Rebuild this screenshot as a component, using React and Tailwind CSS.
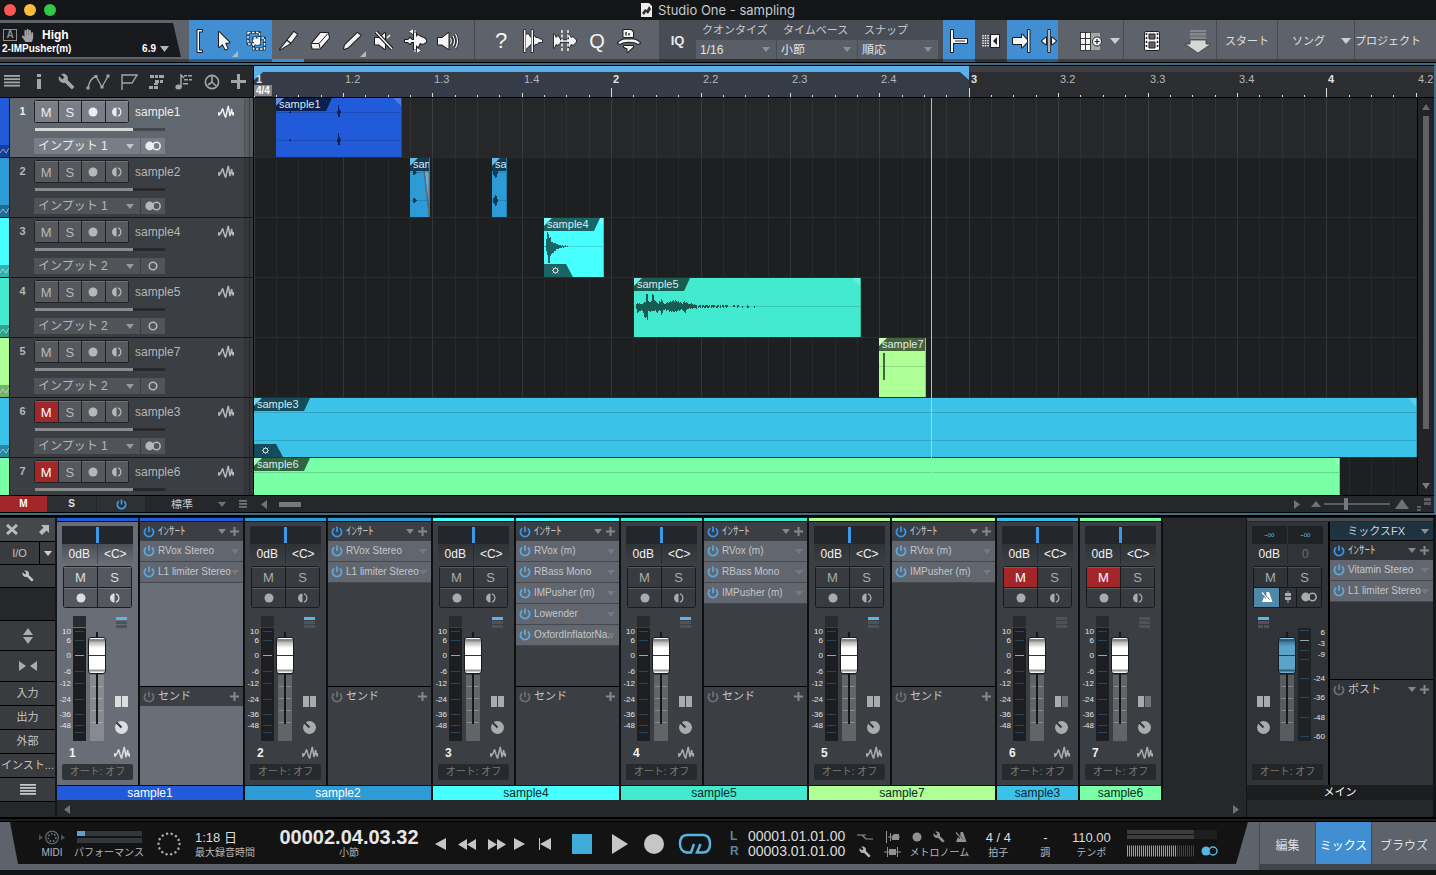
import React, { useState } from 'react';
import clsx from 'clsx';
import { FaHandPaper } from 'react-icons/fa';
import { MdBuild } from 'react-icons/md';

const BEAT = 89.4;
const STEP = BEAT / 4;

const TRACKS = [
  { id: 1, name: 'sample1', input: 'インプット 1', stereo: true, color: '#215bd9', dark: '#0a2150', text: '#ffffff', selected: true },
  { id: 2, name: 'sample2', input: 'インプット 1', stereo: true, color: '#2c9bd6', dark: '#0f3b54', text: '#ffffff' },
  { id: 3, name: 'sample4', input: 'インプット 2', color: '#48ffff', dark: '#1a6466', text: '#14272b' },
  { id: 4, name: 'sample5', input: 'インプット 2', color: '#42ebcf', dark: '#175b51', text: '#14272b' },
  { id: 5, name: 'sample7', input: 'インプット 2', color: '#adff96', dark: '#446539', text: '#14272b' },
  { id: 6, name: 'sample3', input: 'インプット 1', stereo: true, muted: true, color: '#3ac2e8', dark: '#144c5c', text: '#14272b' },
  { id: 7, name: 'sample6', input: 'インプット 1', stereo: true, muted: true, color: '#79ffa6', dark: '#2f6642', text: '#14272b' },
];

// [x, up, down] columns around the centre line
const WAVES = {
  hit: [[1, 1, 1], [2, 8, 5], [3, 15, 9], [4, 13, 17], [5, 9, 17], [6, 10, 10], [7, 5, 8], [8, 5, 7], [9, 4, 7], [10, 4, 5], [11, 4, 5], [12, 3, 3], [13, 3, 3], [14, 2, 3], [15, 2, 2], [16, 2, 2], [17, 1, 2], [18, 2, 1], [19, 1, 2], [20, 1, 1], [21, 2, 1], [23, 1, 1]],
  tail: [[2, 3, 3], [3, 4, 7], [4, 3, 6], [5, 4, 5], [6, 3, 5], [7, 3, 4], [8, 3, 5], [9, 4, 7], [10, 5, 11], [11, 5, 12], [12, 13, 11], [13, 13, 14], [14, 6, 5], [15, 5, 5], [16, 5, 6], [17, 6, 5], [18, 13, 5], [19, 12, 5], [20, 7, 5], [21, 6, 4], [22, 5, 6], [23, 4, 7], [24, 3, 5], [25, 6, 4], [26, 5, 5], [27, 8, 9], [28, 6, 7], [29, 4, 4], [30, 3, 4], [31, 3, 3], [32, 4, 5], [33, 5, 4], [34, 4, 4], [35, 5, 6], [36, 6, 5], [37, 5, 6], [38, 6, 5], [39, 7, 6], [40, 5, 6], [41, 7, 5], [42, 6, 6], [43, 5, 5], [44, 6, 4], [45, 4, 5], [46, 5, 4], [47, 4, 3], [48, 3, 4], [49, 5, 5], [50, 6, 6], [51, 4, 7], [52, 5, 4], [53, 4, 3], [54, 3, 3], [55, 3, 2], [56, 3, 3], [57, 4, 2], [58, 3, 3], [59, 2, 2], [60, 3, 2], [61, 2, 2], [62, 2, 3], [64, 1, 2], [65, 2, 1], [66, 2, 2], [68, 2, 2], [69, 2, 1], [70, 1, 2], [71, 2, 2], [72, 2, 1], [73, 2, 2], [74, 1, 2], [75, 2, 1], [77, 2, 2], [78, 2, 1], [79, 2, 2], [80, 2, 1], [82, 1, 2], [83, 2, 2], [84, 2, 1], [86, 2, 2], [88, 2, 1], [89, 2, 2], [91, 2, 1], [92, 2, 2], [93, 2, 1], [99, 2, 1], [100, 2, 1], [103, 2, 2], [104, 2, 1], [108, 1, 2], [113, 2, 2], [114, 1, 2], [120, 1, 2]],
  tick: [[4, 14, 14], [5, 14, 14]],
  blip: [[3, 3, 3], [4, 3, 3], [5, 2, 2], [6, 1, 1]],
  burst: [[1, 3, 3], [2, 4, 4], [3, 6, 6], [4, 5, 5], [5, 2, 2]],
  spikes: [[13, 1, 1], [14, 2, 1], [61, 2, 2], [62, 8, 5], [63, 4, 5], [64, 2, 1]],
};

const CLIPS = [
  { track: 1, name: 'sample1', x: 22, w: 126, wave: 'spikes' },
  { track: 2, name: 'sample2', x: 156, w: 20, wave: 'blip', fade: true },
  { track: 2, name: 'sample2', x: 238, w: 15, wave: 'burst' },
  { track: 3, name: 'sample4', x: 290, w: 60, wave: 'hit', fx: true },
  { track: 4, name: 'sample5', x: 380, w: 227, wave: 'tail' },
  { track: 5, name: 'sample7', x: 625, w: 47, wave: 'tick' },
  { track: 6, name: 'sample3', x: 0, fx: true },
  { track: 7, name: 'sample6', x: 0, w: 1086 },
];

const INSERTS = {
  1: ['RVox Stereo', 'L1 limiter Stereo'],
  2: ['RVox Stereo', 'L1 limiter Stereo'],
  3: ['RVox (m)', 'RBass Mono', 'IMPusher (m)', 'Lowender', 'OxfordInflatorNa..'],
  4: ['RVox (m)', 'RBass Mono', 'IMPusher (m)'],
  5: ['RVox (m)', 'IMPusher (m)'],
};

/* ---------- icons ---------- */

const Tri = ({ dir = 'down', w = 8, h = 5, className = 'text-[#8d9094]' }) => {
  const pts = {
    down: `0,0 ${w},0 ${w / 2},${h}`,
    up: `0,${h} ${w},${h} ${w / 2},0`,
    left: `${w},0 ${w},${h} 0,${h / 2}`,
    right: `0,0 ${w},${h / 2} 0,${h}`,
  };
  return (
    <svg width={w} height={h} className={clsx('shrink-0', className)} aria-hidden="true">
      <polygon points={pts[dir]} fill="currentColor" />
    </svg>
  );
};

const Plus = ({ size = 8, t = 2, className }) => (
  <svg width={size} height={size} viewBox="0 0 16 16" className={clsx('shrink-0', className)} aria-hidden="true">
    <path d="M8 0V16M0 8H16" stroke="currentColor" strokeWidth={(t * 16) / size} />
  </svg>
);

const Power = ({ className, size = 12 }) => (
  <svg width={size} height={size} viewBox="0 0 12 12" fill="none" stroke="currentColor" strokeWidth="1.8" className={clsx('shrink-0', className)} aria-hidden="true">
    <path d="M3.2 2.4A4.6 4.6 0 1 0 8.8 2.4" />
    <path d="M6 0.5V6" />
  </svg>
);

const WaveIcon = ({ className }) => (
  <svg width="16" height="14" viewBox="0 0 16 14" fill="none" stroke="currentColor" strokeWidth="1.500" strokeLinejoin="bevel" className={className} aria-hidden="true">
    <path d="M.8 7V10.500L3 7.500L4.600 3.500L6.200 9L7.600 12.500L8.600 8L10.300 1L12 11L13.700 4L14.200 8.500L15.300 10.500V7" />
  </svg>
);

const Rec = ({ r = 4.5 }) => (
  <svg width="12" height="12" aria-hidden="true"><circle cx="6" cy="6" r={r} fill="currentColor" /></svg>
);

const Monitor = () => (
  <svg width="12" height="12" viewBox="0 0 12 12" aria-hidden="true">
    <path d="M5.500 1.500A4.500 4.500 0 0 0 5.500 10.500Z" fill="currentColor" />
    <path d="M7 1.800A4.500 4.500 0 0 1 7 10.200" fill="none" stroke="currentColor" strokeWidth="1.200" />
  </svg>
);

const StereoIcon = () => (
  <svg width="16" height="10" viewBox="0 0 16 10" aria-hidden="true">
    <circle cx="4.700" cy="5" r="4.400" fill="currentColor" />
    <circle cx="11.500" cy="5" r="3.700" fill="none" stroke="currentColor" strokeWidth="1.600" />
  </svg>
);

const MonoIcon = () => (
  <svg width="10" height="10" aria-hidden="true"><circle cx="5" cy="5" r="3.800" fill="none" stroke="currentColor" strokeWidth="1.600" /></svg>
);

const Gear = () => (
  <svg width="9" height="9" viewBox="0 0 9 9" stroke="#dfe6e6" fill="none" aria-hidden="true">
    <circle cx="4.500" cy="4.500" r="2.300" />
    <path d="M4.500 1V1.800M4.500 7.200V8M1 4.500H1.800M7.200 4.500H8M1.700 1.700L2.500 2.500M6.500 6.500L7.300 7.300M7.300 1.700L6.500 2.500M1.700 7.300L2.500 6.500" />
  </svg>
);

const Lines = ({ w = 16, h = 11, n = 4, className }) => (
  <svg width={w} height={h} className={className} aria-hidden="true">
    {Array.from({ length: n }, (_, i) => (
      <rect key={i} x="0" y={i * (h / n)} width={w} height="1.800" fill="currentColor" />
    ))}
  </svg>
);

const Metronome = ({ size = 12 }) => (
  <svg width={size} height={size} viewBox="0 0 12 12" aria-hidden="true">
    <path d="M5.500 1H8L11.500 11H1L3 6L5 8Z" fill="currentColor" />
    <path d="M1 1.500L8 9" stroke="currentColor" strokeWidth="1.200" />
    <path d="M3.500 3L8.500 8.500" stroke="#222" strokeWidth=".6" />
  </svg>
);

const ink = { fill: '#f4f4f4', stroke: '#1d1e22', strokeWidth: 2, paintOrder: 'stroke', strokeLinejoin: 'round' };
const Ico = ({ children, size = 24 }) => (
  <svg width={size} height={size} viewBox="0 0 24 24" className="shrink-0" {...ink} aria-hidden="true">{children}</svg>
);

const ICONS = {
  bracket: <Ico><path d="M15 1H10.500V23H15V21.500H12V2.500H15Z" /></Ico>,
  arrow: <Ico><path d="M7 3V18L10.500 15L13.500 20.500L15.700 19.400L13 14L17.500 13.500Z" /></Ico>,
  range: (
    <Ico>
      <path d="M4 3.500H15.500V15H4ZM9.500 9H20.500V20H9.500Z" fill="none" stroke="#1d3d5c" strokeWidth="3" />
      <path d="M4 3.500H15.500V15H4ZM9.500 9H20.500V20H9.500Z" fill="none" stroke="#f4f4f4" strokeWidth="1.400" strokeDasharray="2.500 1.500" />
      <rect x="10" y="9.500" width="6" height="6" stroke="none" />
    </Ico>
  ),
  knife: <Ico><path d="M18 3L21 5.500L15 13.500L11.500 11Z" /><path d="M11 12L14 14.500L4 20.500Z" /></Ico>,
  eraser: (
    <Ico>
      <path d="M12.500 4H20L21 9L12 19.500H4.500L3.500 15Z" />
      <path d="M3.500 14.500H11L20 4.500M11 14.500L12 19" fill="none" strokeWidth="1" />
    </Ico>
  ),
  pencil: <Ico><path d="M17.500 4L20.500 6.500L8 18.500L4 20L5 16Z" /></Ico>,
  mute: (
    <Ico>
      <path d="M3 9H7L13 4V20L7 15.500H3Z" />
      <path d="M4 3L20 20" stroke="#1d1e22" strokeWidth="4" />
      <path d="M4 3L20 20" stroke="#f4f4f4" strokeWidth="1.500" />
      <path d="M15 9L18 6" stroke="#f4f4f4" strokeWidth="1.500" />
    </Ico>
  ),
  bend: (
    <Ico>
      <path d="M1 11H4L6 9L8 11H10V4H12V8L14 6L17 8L20 9L22 11V13L19 15L16 14L14 18L12 16V20H10V13H7L6 15L4 13H1Z" />
      <path d="M9 0V5L5 2.500ZM13 19V24L17 21.500Z" strokeWidth="1" />
      <path d="M11 1V23" stroke="#f4f4f4" strokeWidth="1" />
    </Ico>
  ),
  listen: (
    <Ico>
      <path d="M2 9H6L12.500 4V20L6 15.500H2Z" />
      <path d="M14.500 9Q16 12 14.500 15M17 7Q20 12 17 17M19.500 5Q23.500 12 19.500 19" fill="none" stroke="#1d1e22" strokeWidth="2.800" />
      <path d="M14.500 9Q16 12 14.500 15M17 7Q20 12 17 17M19.500 5Q23.500 12 19.500 19" fill="none" stroke="#f4f4f4" strokeWidth="1.300" />
    </Ico>
  ),
  help: <span className="text-[22px] leading-6 text-[#f4f4f4]">?</span>,
  transient: (
    <Ico>
      <path d="M3 1H4.500V23H3ZM5 6L7 5L10 9V15L7 18L5 20ZM10.500 1H12V23H10.500ZM13 7L15 9H17L19 10.500H21V13H18L16 15H14L13 17Z" strokeWidth="1.500" />
    </Ico>
  ),
  split: (
    <Ico>
      <path d="M1 5L3 9L5 7L7 10V14L5 16L3 15L1 19ZM7 11.300H17V12.700H7ZM16 5L18 9L20 8L23 11V13L20 16L18 15L16 19Z" strokeWidth="1.500" />
      <path d="M9 1V23M15 1V23" fill="none" stroke="#f4f4f4" strokeWidth="1.500" strokeDasharray="3 1.500" />
    </Ico>
  ),
  quantize: <span className="text-[20px] leading-6 text-[#f4f4f4]">Q</span>,
  macro: (
    <Ico>
      <path d="M6.500 1H14L16 3V8H6.500Z" />
      <path d="M9 3V6.500M12 4V6.500" strokeWidth="1.300" />
      <path d="M1 14Q4 10.500 8 10.500H16Q20 10.500 23 14L21 15Q18 12.800 12 12.800Q6 12.800 3 15Z" />
      <path d="M7 17H16V18L10.500 23V19.500L7 18Z" />
    </Ico>
  ),
  iq: <span className="text-[13px] font-bold text-[#e8e8e8]">IQ</span>,
};

const SNAP_ICONS = {
  grid: <Ico><path d="M4 1H6V23H4ZM6 10H20V14H6Z" /><path d="M8 12H18" stroke="#1d3d5c" strokeWidth="1" /></Ico>,
  events: (
    <Ico>
      <path d="M4 6V18M6.500 6V18M9 6V18" stroke="#f4f4f4" strokeWidth="1.500" strokeDasharray="1.500 1" />
      <path d="M12 6H20V18H12Z" /><path d="M18 8V16L14 12Z" fill="#222" stroke="none" />
    </Ico>
  ),
  cursor: <Ico><path d="M2 9H11V5.500L17 12L11 18.500V15H2Z" /><path d="M17 1H18.500V23H17Z" /></Ico>,
  both: <Ico><path d="M11.300 1H12.700V23H11.300ZM9 8.500V15.500L5 12ZM15 8.500V15.500L19 12Z" /></Ico>,
};

/* ---------- small controls ---------- */

const Select = ({ label, value, className, triClass }) => (
  <span className={clsx('relative flex items-center', className)}>
    <select aria-label={label} className="w-full h-full appearance-none bg-transparent pl-1 pr-3 outline-none">
      <option>{value}</option>
    </select>
    <span className="absolute right-1.5 pointer-events-none"><Tri className={triClass} /></span>
  </span>
);

const MsButton = ({ children, label, on, className }) => (
  <button
    aria-label={label}
    className={clsx('flex items-center justify-center border-t border-white/15', on ? 'bg-[#a3262b] text-white' : className)}
  >
    {children}
  </button>
);

/* ---------- top ---------- */

function TitleBar() {
  return (
    <header className="relative h-5 bg-[#141517] flex items-center justify-center shrink-0">
      <div className="absolute left-1 flex gap-2">
        <button aria-label="Close" className="w-3 h-3 rounded-full bg-[#fc5753]" />
        <button aria-label="Minimize" className="w-3 h-3 rounded-full bg-[#fdbc40]" />
        <button aria-label="Zoom" className="w-3 h-3 rounded-full bg-[#33c748]" />
      </div>
      <svg width="11" height="14" viewBox="0 0 11 14" aria-hidden="true">
        <path d="M0 0H8L11 3V14H0Z" fill="#eee" />
        <path d="M1 10L4 6L6 7L8 3L10 6L7 11L5 9L3 12Z" fill="#333" />
      </svg>
      <h1 className="ml-1.5 text-[13px] font-[family-name:Inter,sans-serif] text-[#c9c9c9]">Studio One - sampling</h1>
    </header>
  );
}

function ToolButton({ icon, label, blue, active, corner, className }) {
  return (
    <button
      aria-label={label}
      className={clsx(
        'relative w-8 h-full shrink-0 flex items-center justify-center border-b-[3px] pt-[2px]',
        blue ? 'bg-[#418fd2]' : '',
        active ? 'border-[#418fd2]' : 'border-black/35',
        className
      )}
    >
      {icon}
      {corner && <span className="absolute right-0.5 bottom-0.5 w-1.5 h-1.5 bg-[#b4b7bb] [clip-path:polygon(100%_0,100%_100%,0_100%)]" />}
    </button>
  );
}

function Field({ label, value }) {
  return (
    <label className="flex flex-col w-[81px] h-full text-[12px] text-[#e2e2e2]">
      <span className="h-5 leading-5 pl-1.5 whitespace-nowrap text-[11px] text-[#c9cacc]">{label}</span>
      <Select label={label} value={value} className="h-[19px] mr-px bg-[#5a5e66]" />
    </label>
  );
}

function Toolbar() {
  return (
    <div className="h-[42px] shrink-0 flex bg-[#5e626b] overflow-hidden">
      <div className="w-[189px] shrink-0 pt-[3px] border-b-[3px] border-black/35">
        <div className="w-[181px] h-[34px] bg-[#181a1e] [clip-path:polygon(0_0,173px_0,100%_100%,0_100%)] text-white font-bold">
          <div className="flex items-center gap-1 pl-[3px] pt-1 h-5">
            <span className="w-[14px] h-3 border border-[#8d8d8d] text-[#8d8d8d] text-[10px] leading-[10px] text-center">A</span>
            <FaHandPaper size={13} className="text-[#a2a2a2]" />
            <span className="ml-1 text-[12px]">High</span>
          </div>
          <div className="flex items-center text-[10px] h-3 pl-0.5">
            <span className="flex-1">2-IMPusher(m)</span>
            <span>6.9</span>
            <Tri w={9} h={6} className="text-[#b5b5b5] ml-1 mr-3" />
          </div>
        </div>
      </div>
      <ToolButton blue icon={ICONS.bracket} label="Link tools" className="w-[19px]" />
      <ToolButton blue corner icon={ICONS.arrow} label="Arrow tool" />
      <ToolButton blue icon={ICONS.range} label="Range tool" />
      <ToolButton active icon={ICONS.knife} label="Split tool" />
      <ToolButton icon={ICONS.eraser} label="Eraser tool" />
      <ToolButton corner icon={ICONS.pencil} label="Paint tool" />
      <ToolButton icon={ICONS.mute} label="Mute tool" />
      <ToolButton icon={ICONS.bend} label="Bend tool" />
      <ToolButton icon={ICONS.listen} label="Listen tool" />
      <div className="w-[11px] shrink-0 border-r border-[#45484e] border-b-[3px] border-b-black/35" />
      <div className="flex pl-2.5 pr-[14px] border-b-[3px] border-black/35">
        <ToolButton icon={ICONS.help} label="Help" className="border-none" />
        <ToolButton icon={ICONS.transient} label="Transients" className="border-none" />
        <ToolButton icon={ICONS.split} label="Strip silence" className="border-none" />
        <ToolButton icon={ICONS.quantize} label="Quantize" className="border-none" />
        <ToolButton icon={ICONS.macro} label="Macros" className="border-none" />
      </div>
      <div className="flex bg-[#484c54] border-b-[3px] border-black/35 pr-1">
        <ToolButton icon={ICONS.iq} label="Input quantize" className="border-none w-[37px]" />
        <Field label="クオンタイズ" value="1/16" />
        <Field label="タイムベース" value="小節" />
        <Field label="スナップ" value="順応" />
      </div>
      <ToolButton blue icon={SNAP_ICONS.grid} label="Autoscroll" />
      <ToolButton icon={SNAP_ICONS.events} label="Snap to events" className="bg-[#484c54]" />
      <ToolButton blue icon={SNAP_ICONS.cursor} label="Snap to cursor" />
      <ToolButton blue icon={SNAP_ICONS.both} label="Snap relative" className="w-[19px]" />
      <nav className="flex-1 flex items-center text-[11px] text-[#e0e0e0] border-b-[3px] border-black/35 whitespace-nowrap *:pt-[3px]">
        <button aria-label="Grid view" className="flex items-center gap-2 h-full w-[66px] pl-[22px] border-r border-[#484b52]">
          <svg width="22" height="19" viewBox="0 0 22 19" aria-hidden="true">
            <g fill="#f4f4f4" stroke="#222" strokeWidth=".8">
              {[0, 1, 2].map(r => [0, 1].map(c => <rect key={`${r}${c}`} x={c * 5 + 0.5} y={r * 6 + 0.5} width="5" height="6" />))}
            </g>
            <path d="M11 1H20V18H11Z" fill="#a3a6ac" />
            <circle cx="17" cy="9.500" r="4.500" fill="#f4f4f4" stroke="#222" />
            <path d="M17 7V12M14.500 9.500H19.500" stroke="#222" strokeWidth="1.200" />
          </svg>
          <Tri w={10} h={6} className="text-[#cfcfcf]" />
        </button>
        <button aria-label="Video player" className="h-full w-14 flex items-center justify-center">
          <svg width="16" height="20" viewBox="0 0 16 20" aria-hidden="true">
            <rect x=".5" y=".5" width="15" height="19" rx="1.500" fill="#f4f4f4" stroke="#222" />
            <path d="M5 3H11V8H5ZM5 11H11V17H5Z" fill="#5e626b" stroke="#222" />
            <path d="M2.500 2V18M13.500 2V18" stroke="#222" strokeWidth="1.500" strokeDasharray="2 2" />
          </svg>
        </button>
        <button aria-label="Export" className="h-full w-[37px] flex items-center justify-center border-r border-[#484b52]">
          <svg width="28" height="25" viewBox="0 0 28 25" aria-hidden="true">
            <path d="M6 1H22V3H6ZM6 4H22V6.500H6ZM6 7.500H22V10H6Z" fill="#85888f" />
            <path d="M6 11H22V15H27L14 24L1 15H6Z" fill="#d5d7d6" stroke="#333" strokeWidth=".7" />
          </svg>
        </button>
        <a href="#start" className="w-[61px] h-full flex items-center justify-center border-r border-[#484b52]">スタート</a>
        <a href="#song" className="w-[77px] h-full flex items-center justify-end gap-4 pr-[3px] border-r border-[#484b52]">
          ソング <Tri w={10} h={6} className="text-[#cfcfcf]" />
        </a>
        <a href="#project" className="h-full flex items-center">プロジェクト</a>
      </nav>
    </div>
  );
}

/* ---------- arrangement ---------- */

function TrackTools() {
  return (
    <div className="w-[253px] shrink-0 h-full bg-[#26282b] text-[#a3a5a7] flex items-center justify-between pl-1 pr-[7px]">
      <button aria-label="Track list"><Lines w={16} h={13} /></button>
      <button aria-label="Inspector" className="w-4 flex justify-center">
        <svg width="4" height="15" aria-hidden="true"><path d="M0 0H4V3H0ZM0 5H4V15H0Z" fill="currentColor" /></svg>
      </button>
      <button aria-label="Options"><MdBuild size={17} /></button>
      <button aria-label="Automation">
        <svg width="24" height="16" viewBox="0 0 24 16" fill="none" stroke="currentColor" strokeWidth="1.300" aria-hidden="true">
          <path d="M2 14Q4 4 10 2.500L16 13L22 2" />
          <path d="M.5 12.500H3.500V15.500H.5ZM8.500 1H11.500V4H8.500ZM14.500 11.500H17.500V14.500H14.500ZM20.500 .5H23.500V3.500H20.500Z" fill="currentColor" stroke="none" />
        </svg>
      </button>
      <button aria-label="Marker track">
        <svg width="17" height="16" viewBox="0 0 17 16" fill="none" stroke="currentColor" strokeWidth="1.400" aria-hidden="true"><path d="M1 16V1H16L11 9H1" /></svg>
      </button>
      <button aria-label="Arranger track">
        <svg width="15" height="16" aria-hidden="true"><path d="M1 1H5V4H1ZM6 1H9V4H6ZM10 1H15V4H10ZM6 6H10V9H6ZM11 6H14V9H11ZM0 12H4V15H0ZM5 12H9V15H5ZM5 9H9V11H5Z" fill="currentColor" /></svg>
      </button>
      <button aria-label="Chord track">
        <svg width="18" height="16" viewBox="0 0 18 16" aria-hidden="true">
          <ellipse cx="3.500" cy="13" rx="3.200" ry="2.500" fill="currentColor" />
          <path d="M6 13V1L9 4" stroke="currentColor" strokeWidth="1.500" fill="none" />
          <path d="M9 1H12V2.500H9ZM13 1H17V2.500H13ZM9 5H13V6.500H9ZM14 5H17V6.500H14ZM8 9H13V10.500H8Z" fill="currentColor" />
        </svg>
      </button>
      <button aria-label="Tempo track">
        <svg width="16" height="16" viewBox="0 0 16 16" fill="none" stroke="currentColor" strokeWidth="1.600" aria-hidden="true"><circle cx="8" cy="8" r="6.600" /><path d="M8 2V9M8 8L12 12M8 8L4 11" /></svg>
      </button>
      <button aria-label="Add track"><Plus size={15} t={3} /></button>
    </div>
  );
}

function Ruler() {
  const ticks = Array.from({ length: 53 }, (_, i) => i);
  return (
    <div className="relative flex-1 h-full bg-[#2b2d31] overflow-hidden text-[11px]">
      <div className="h-1.5 bg-[#3d3f43]" />
      <div className="absolute inset-y-0 left-0 w-[715px] bg-[#363b48]" />
      <div className="absolute left-0 top-0 w-[715px] h-[14px] bg-[#5cb0ea] [clip-path:polygon(0_0,100%_0,100%_100%,706px_6px,9px_6px,0_100%)]" />
      {ticks.map(i => {
        const bar = Math.floor(i / 16) + 1;
        const beat = (Math.floor(i / 4) % 4) + 1;
        const isBar = i % 16 === 0;
        const isBeat = i % 4 === 0;
        return (
          <React.Fragment key={i}>
            <span
              className={clsx('absolute bottom-0 w-px bg-[#dadbdd]', isBar ? 'h-[9px]' : isBeat ? 'h-1' : 'h-0.5')}
              style={{ left: Math.floor(i * STEP) }}
            />
            {isBeat && (
              <span
                className={clsx('absolute top-1.5 leading-[15px]', isBar ? 'font-bold text-[#e0e1e3]' : 'text-[#b4b6b9]')}
                style={{ left: Math.floor(i * STEP) + 2 }}
              >
                {isBar ? bar : `${bar}.${beat}`}
              </span>
            )}
          </React.Fragment>
        );
      })}
      <span className="absolute left-0 bottom-px px-0.5 bg-[#85868a] text-[10px] leading-[11px] font-bold text-white">4/4</span>
    </div>
  );
}

function TrackHeader({ track }) {
  return (
    <li className={clsx('h-[60px] flex border-b border-[#17181a]', track.selected ? 'bg-[#61676e] text-[#eceded]' : 'bg-[#3b3e42] text-[#b5b7b9]')}>
      <div className="w-[9px] flex flex-col justify-end" style={{ background: track.color }}>
        <div className="h-3 bg-black/30 flex items-center text-white/50">
          <svg width="9" height="8" fill="none" stroke="currentColor" aria-hidden="true"><path d="M0 6L3 2L6 6L9 1" /></svg>
        </div>
      </div>
      <span className="w-[25px] pt-2 pl-px text-center text-[11px] font-bold border-l border-[#17181a]">{track.id}</span>
      <div className="flex-1 pt-[2px]">
        <div className="flex items-center h-[23px]">
          <div className="grid grid-cols-4 gap-px w-[95px] h-[23px] p-px rounded-[3px] bg-[#1f2123] text-[13px]">
            {[
              ['Mute', 'M'],
              ['Solo', 'S'],
              ['Record', <Rec key="r" />],
              ['Monitor', <Monitor key="m" />],
            ].map(([label, content], i) => (
              <MsButton
                key={label}
                label={`${label} ${track.name}`}
                on={i === 0 && track.muted}
                className={track.selected ? 'bg-[#7a7d87]' : 'bg-[#55585d]'}
              >
                {content}
              </MsButton>
            ))}
          </div>
          <span className="ml-1.5 flex-1 text-[12px]">{track.name}</span>
          <WaveIcon className="mr-[10px]" />
        </div>
        <div className="h-3 mb-[3px] flex items-center">
          <input
            type="range"
            aria-label={`Volume ${track.name}`}
            defaultValue="75"
            className={clsx(
              'block ml-px w-[130px] h-[3px] appearance-none [&::-webkit-slider-thumb]:appearance-none [&::-webkit-slider-thumb]:w-0',
              track.selected
                ? 'bg-[linear-gradient(to_right,#d5d6d7_98px,#44474c_98px)]'
                : 'bg-[linear-gradient(to_right,#898b8e_98px,#26282b_98px)]'
            )}
          />
        </div>
        <div className={clsx('flex gap-px h-4 text-[12px]', track.selected ? '*:bg-[#797d86]' : '*:bg-[#505358]')}>
          <Select label={`Input ${track.name}`} value={track.input} className="w-[106px]" triClass={track.selected ? 'text-[#c5c7ca]' : 'text-[#97999c]'} />
          <button aria-label={`Channel mode ${track.name}`} className="w-6 flex items-center justify-center">
            {track.stereo ? <StereoIcon /> : <MonoIcon />}
          </button>
        </div>
      </div>
      <div className="w-[9px] bg-black/10 border-l border-black/10 flex justify-center"><span className="w-px bg-black/30" /></div>
    </li>
  );
}

function Clip({ clip, track }) {
  const cols = WAVES[clip.wave] || [];
  const lines = track.stereo ? [14, 42] : [28];
  return (
    <div
      className="absolute top-0 h-[59px] overflow-hidden border-r border-black/20"
      style={{ left: clip.x, background: track.color, ...(clip.w ? { width: clip.w } : { right: 0 }) }}
    >
      <svg width="100%" height="59" className="absolute inset-0" aria-hidden="true">
        {lines.map(y => (
          <g key={y}>
            <rect x="0" y={y} width="100%" height="1" fill="#000" opacity=".15" />
            {cols.map(([x, up, down]) => (
              <rect key={x} x={x} y={y - up + 1} width="1" height={up + down - 1} fill={track.dark} />
            ))}
          </g>
        ))}
        {clip.fade && <path d="M13 0L19 59M14 13L19 50V13Z" stroke="#5a6570" fill="#fff" fillOpacity=".25" />}
      </svg>
      <span className="absolute left-0 top-0 w-2 h-2 bg-white/30 [clip-path:polygon(0_0,100%_0,0_100%)]" />
      <span className="absolute right-0 top-0 w-2 h-2 bg-white/20 [clip-path:polygon(0_0,100%_0,100%_100%)]" />
      <span
        className="relative block w-14 h-[13px] pl-[3px] text-[11px] leading-[13px] text-[#dfe7ea] whitespace-nowrap [clip-path:polygon(8px_0,100%_0,50px_100%,0_100%,0_8px)]"
        style={{ background: track.dark }}
      >
        {clip.name}
      </span>
      {clip.fx && (
        <span
          className="absolute left-0 bottom-0 w-[29px] h-[13px] pl-[7px] flex items-center [clip-path:polygon(0_0,22px_0,100%_100%,0_100%)]"
          style={{ background: track.dark }}
        >
          <Gear />
        </span>
      )}
    </div>
  );
}

function Arrangement() {
  const grid = Array.from({ length: 52 }, (_, i) => i);
  return (
    <main className="flex-1 min-h-0 flex flex-col border-y-2 border-r-2 border-[#3f6e89] bg-black">
      <div className="h-8 shrink-0 flex gap-px pt-px">
        <TrackTools />
        <Ruler />
      </div>
      <div className="flex-1 min-h-0 flex gap-px pt-px">
        <ul className="w-[253px] shrink-0 overflow-hidden">
          {TRACKS.map(t => <TrackHeader key={t.id} track={t} />)}
        </ul>
        <div className="relative flex-1 overflow-hidden bg-[#1e1f21]">
          {grid.map(i => (
            <span
              key={i}
              className={clsx('absolute inset-y-0 w-px', i % 4 === 0 ? 'bg-[#343638]' : 'bg-[#27292b]')}
              style={{ left: Math.floor(i * STEP) }}
            />
          ))}
          {TRACKS.map(t => (
            <div key={t.id} className={clsx('relative h-[60px] border-b border-[#2b2c2e]', t.selected && 'bg-white/4')}>
              {CLIPS.filter(c => c.track === t.id).map(c => <Clip key={c.x} clip={c} track={t} />)}
            </div>
          ))}
          <span className="absolute inset-y-0 left-[677px] w-px bg-[#c9cbcc]/90" />
        </div>
        <div className="w-4 shrink-0 bg-[#222326] flex flex-col items-center pt-1.5 pb-1.5 gap-1.5">
          <Tri dir="up" w={8} h={6} className="text-[#68696c]" />
          <span className="w-1.5 h-[313px] bg-[#606165]" />
          <Tri w={8} h={6} className="text-[#7a7b7e] mt-auto" />
        </div>
      </div>
      <div className="h-[18px] shrink-0 flex items-center bg-[#26272b] border-y border-black text-[#707278]">
        <button className="w-[47px] h-full bg-[#a3262b] text-white text-[10px] font-bold">M</button>
        <button className="w-[49px] h-full bg-[#2e2f32] text-[#e0e0e0] text-[10px] font-bold">S</button>
        <button aria-label="Automation power" className="w-12 h-full ml-px bg-[#2e3033] text-[#36a0ec] flex items-center justify-center"><Power size={11} /></button>
        <Select label="Automation mode" value="標準" className="w-[87px] h-full pl-[22px] text-[11px] text-[#c9cacb]" triClass="text-[#707278]" />
        <Lines w={8} h={9} n={3} className="ml-[7px]" />
        <Tri dir="left" w={6} h={9} className="ml-3.5" />
        <span className="ml-3 w-[22px] h-[5px] bg-[#77787c]" />
        <Tri dir="right" w={6} h={9} className="ml-auto" />
        <Tri dir="up" w={10} h={6} className="ml-[11px]" />
        <input
          type="range"
          aria-label="Zoom"
          defaultValue="33"
          className="mx-[3px] w-[66px] h-3 appearance-none bg-[linear-gradient(transparent_5px,#5b5c64_5px,#5b5c64_7px,transparent_7px)] [&::-webkit-slider-thumb]:appearance-none [&::-webkit-slider-thumb]:w-1 [&::-webkit-slider-thumb]:h-3 [&::-webkit-slider-thumb]:bg-[#77787f]"
        />
        <Tri dir="up" w={14} h={10} className="ml-0.5" />
        <svg width="14" height="13" className="ml-2 mr-[3px]" aria-hidden="true"><path d="M7 0H14V3H7ZM7 4H14V7H7ZM0 8H4V10H0ZM0 11H4V13H0Z" fill="#5b5c64" /></svg>
      </div>
    </main>
  );
}

/* ---------- mixer ---------- */

const SCALE = [[15, '10'], [24, '6'], [39, '0'], [55, '-6'], [67, '-12'], [83, '-24'], [98, '-36'], [109, '-48'], [116, '']];
const MAIN_SCALE = [[14, '6'], [24, '-3'], [34, '-9'], [43, ''], [62, '-24'], [81, '-36'], [101, '-48'], [120, '-60']];

const Meter = () => (
  <svg width="29" height="125" className="shrink-0" aria-label="Level meter">
    <rect x="16" y="0" width="13" height="11" fill="#292b2e" />
    <rect x="16" y="12" width="13" height="113" fill="#1c1e21" />
    {SCALE.map(([y, label]) => (
      <g key={y}>
        <rect x="18" y={y} width="9" height="1" fill={label === '0' ? '#9aa5ad' : '#27475f'} />
        <text x="14" y={y + 3} textAnchor="end" fontSize="8" fill="#e2e4e6">{label}</text>
      </g>
    ))}
  </svg>
);

const MainMeter = () => (
  <svg width="29" height="125" className="shrink-0" aria-label="Main level meter">
    <rect x="0" y="12" width="13" height="113" fill="#1f2125" />
    {MAIN_SCALE.map(([y, label], i) => (
      <g key={y}>
        <rect x="2" y={y} width="9" height="1" fill={i === 1 ? '#9aa5ad' : '#27475f'} />
        <text x="27" y={i < 3 ? 19 + i * 11 : y + 3} textAnchor="end" fontSize="8" fill="#e2e4e6">{label}</text>
      </g>
    ))}
  </svg>
);

const Fader = ({ label, main }) => (
  <input
    type="range"
    aria-label={label}
    defaultValue="93"
    className={clsx(
      'block mt-4 w-[18px] h-[109px] appearance-none [writing-mode:vertical-lr] [direction:rtl]',
      'bg-[linear-gradient(#17181a,#17181a),repeating-linear-gradient(transparent_0_11px,rgba(255,255,255,0.25)_11px_12px),linear-gradient(rgba(255,255,255,0.2),rgba(255,255,255,0.2))]',
      'bg-no-repeat bg-[size:2px_92px,12px_48px,14px_66px] bg-[position:8px_0,3px_43px,2px_43px]',
      '[&::-webkit-slider-thumb]:appearance-none [&::-webkit-slider-thumb]:w-[18px] [&::-webkit-slider-thumb]:h-[37px] [&::-webkit-slider-thumb]:rounded-[3px] [&::-webkit-slider-thumb]:border [&::-webkit-slider-thumb]:border-[#1b1c1e]',
      main
        ? '[&::-webkit-slider-thumb]:bg-[linear-gradient(#8cc4e2_0_1px,#2c5c78_1px_3px,#417f9f_4px,#5ba3c9_9px_17px,#2b3a44_17px_18px,#5ba3c9_18px_31px,#2c5c78_32px_33px,#6fb1d3_34px)]'
        : '[&::-webkit-slider-thumb]:bg-[linear-gradient(#ffffff_0_1px,#888888_1px_3px,#b5b5b5_4px,#ffffff_10px_17px,#333333_17px_18px,#ffffff_18px_31px,#999999_32px_33px,#f4f4f4_34px)]'
    )}
  />
);

const GroupIcon = ({ lit, main }) => (
  <svg width="13" height="13" aria-hidden="true">
    <rect x="1" y="1" width="11" height="3" fill={lit ? '#5fb3ea' : '#515254'} />
    <rect x="1" y="5" width="11" height="3" fill="#515254" />
    <path d={main ? 'M1 9H6V12H1ZM7 9H12V12H7Z' : 'M1 9H12V12H1Z'} fill="#515254" />
  </svg>
);

const PairIcon = ({ mono }) => (
  <svg width="13" height="11" aria-hidden="true">
    <rect width="6" height="11" fill="currentColor" />
    <rect x="7" width="6" height="11" fill="currentColor" opacity={mono ? 0.5 : 1} />
  </svg>
);

const Knob = () => (
  <svg width="13" height="13" viewBox="0 0 13 13" aria-hidden="true">
    <circle cx="6.500" cy="6.500" r="6.500" fill="currentColor" />
    <path d="M1.500 1.500L6.500 6.500" stroke="#333538" strokeWidth="2" />
  </svg>
);

const SideIcons = ({ lit, mono, main }) => (
  <div className="flex flex-col items-center w-[13px]">
    <GroupIcon lit={lit} main={main} />
    <span className="mt-[67px]"><PairIcon mono={mono} /></span>
    <span className="mt-[14px]"><Knob /></span>
  </div>
);

function ChannelStrip({ track }) {
  const sel = track.selected;
  return (
    <div className={clsx('w-[81px] h-[263px] px-1 pt-1 flex flex-col', sel ? 'bg-[#696d76] text-[#dcdddf]' : 'bg-[#3b3e42] text-[#a9abad]')}>
      <div className="h-[18px] mx-px bg-[#23272b] flex justify-center py-px"><span className="w-[3px] bg-[#3b97e8]" /></div>
      <div className={clsx('h-5 mx-px mb-[2px] grid grid-cols-2 divide-x divide-black/25 text-center text-[12px] leading-5 text-[#f0f0f0]', sel ? 'bg-[linear-gradient(#4b4f55,#696d76)]' : 'bg-[linear-gradient(#303336,#3b3e42)]')}>
        <span>0dB</span>
        <span>{'<C>'}</span>
      </div>
      <div className="mx-0.5 h-[42px] grid grid-cols-2 grid-rows-2 gap-px p-px rounded-[3px] bg-[#1a1b1d] text-[13px]">
        {[
          ['Mute', 'M'],
          ['Solo', 'S'],
          ['Record', <Rec key="r" />],
          ['Monitor', <Monitor key="m" />],
        ].map(([label, content], i) => (
          <MsButton
            key={label}
            label={`${label} channel ${track.id}`}
            on={i === 0 && track.muted}
            className={sel ? 'bg-[#54585e]' : 'bg-[#383b3f]'}
          >
            {content}
          </MsButton>
        ))}
      </div>
      <div className="mt-2 -ml-1 flex">
        <Meter />
        <span className="ml-0.5"><Fader label={`Fader ${track.name}`} /></span>
        <span className="ml-[9px]"><SideIcons lit={!track.muted} mono={track.muted} /></span>
      </div>
      <div className="h-[23px] flex items-center justify-between pl-2 pr-1">
        <span className="text-[12px] font-bold text-[#f0f0f0]">{track.id}</span>
        <WaveIcon />
      </div>
      <button className="mx-px h-4 rounded-[2px] bg-[#232527]/80 text-[10px] leading-4 text-[#77797b]">オート: オフ</button>
    </div>
  );
}

const RackHead = ({ on, label, tri }) => (
  <div className="h-[19px] flex items-center pl-[3px] pr-1 text-[11px] text-[#c5c7c9]">
    <Power className={on ? 'text-[#3395ee]' : 'text-[#6d6f72]'} />
    <span className="ml-[3px] flex-1">{label}</span>
    {tri && <Tri className="text-[#85878a] mr-1" />}
    <Plus size={9} className="text-[#85878a]" />
  </div>
);

const Slot = ({ name }) => (
  <button className="w-full h-[21px] pl-[3px] pr-1 flex items-center border-b border-[#45484d] bg-[#62666f] text-[10px] text-[#c3c6c9] text-left whitespace-nowrap">
    <Power className="text-[#5ba9df]" />
    <span className="ml-[3px] flex-1 w-0">{name}</span>
    <Tri className="text-[#757981]" />
  </button>
);

function Rack({ slots, selected }) {
  const bg = selected ? 'bg-[#6a6e77]' : 'bg-[#3b3e42]';
  return (
    <div className="w-[103px] h-[263px] flex flex-col bg-[#3b3e42]">
      <RackHead on tri label="ｲﾝｻｰﾄ" />
      <div className={clsx('h-[145px]', bg)}>{slots.map(s => <Slot key={s} name={s} />)}</div>
      <div className="border-t border-black bg-[#3b3e42]"><RackHead label="センド" /></div>
      <div className={clsx('flex-1', bg)} />
    </div>
  );
}

function MixerSide() {
  const cell = 'bg-[#393b3e] flex items-center justify-center text-[12px] text-[#c5c6c8]';
  return (
    <aside className="w-[55px] shrink-0 flex flex-col gap-px bg-black overflow-hidden">
      <div className="h-[23px] flex items-center justify-between px-1.5 bg-[#45484b] text-[#b9babc]">
        <button aria-label="Close mixer"><svg width="12" height="11" aria-hidden="true"><path d="M1 1L11 10M11 1L1 10" stroke="currentColor" strokeWidth="3" /></svg></button>
        <button aria-label="Detach mixer"><svg width="11" height="10" aria-hidden="true"><path d="M3 0H11V8L8.500 5.500L4 10L1 7L5.500 2.500Z" fill="currentColor" /></svg></button>
      </div>
      <div className="h-[22px] flex gap-px">
        <button className={clsx(cell, 'w-[39px]')}><span className="text-[11px]">I/O</span></button>
        <button aria-label="I/O menu" className={clsx(cell, 'flex-1')}><Tri className="text-[#d0d0d0]" /></button>
      </div>
      <button aria-label="Setup" className={clsx(cell, 'h-[22px]')}><MdBuild size={12} /></button>
      <div className="h-8 bg-[#26272b]" />
      <button aria-label="Channel height" className={clsx(cell, 'h-[29px] flex-col gap-0.5')}>
        <Tri dir="up" w={10} h={7} className="text-[#a9abad]" />
        <Tri w={10} h={7} className="text-[#a9abad]" />
      </button>
      <button aria-label="Channel width" className={clsx(cell, 'h-[30px] gap-1')}>
        <Tri dir="right" w={7} h={10} className="text-[#a9abad]" />
        <Tri dir="left" w={7} h={10} className="text-[#a9abad]" />
      </button>
      {['入力', '出力', '外部'].map(l => (
        <button key={l} className={clsx(cell, 'h-[23px]')}><span className="text-[11px]">{l}</span></button>
      ))}
      <button className={clsx(cell, 'h-[23px] whitespace-nowrap')}><span className="text-[11px]">インスト...</span></button>
      <button aria-label="Channel list" className={clsx(cell, 'h-[23px]')}><Lines w={16} h={12} /></button>
      <div className="flex-1 bg-[#26272b]" />
    </aside>
  );
}

function MainChannel() {
  return (
    <div className="w-[186px] shrink-0 ml-px flex flex-col bg-[#26272b] text-[#a9abad]">
      <div className="h-[3px] bg-[#4a4b4e] mb-px" />
      <div className="flex gap-0.5 bg-black">
        <div className="w-[81px] h-[263px] px-1 pt-1 flex flex-col bg-[#303337]">
          <div className="h-[18px] mx-px grid grid-cols-2 gap-px text-center text-[10px] leading-[18px] text-[#4d9ccc] *:bg-[#1f2225]">
            <span>-∞</span>
            <span>-∞</span>
          </div>
          <div className="h-5 mx-px mb-[2px] grid grid-cols-2 divide-x divide-black/25 text-center text-[12px] leading-5">
            <span className="text-[#f0f0f0]">0dB</span>
            <span className="text-[#6c6e71]">0</span>
          </div>
          <div className="mx-0.5 h-[42px] flex flex-col gap-px p-px rounded-[3px] bg-[#17181a] text-[13px]">
            <div className="flex-1 grid grid-cols-2 gap-px">
              <MsButton label="Mute main" className="bg-[#303337]">M</MsButton>
              <MsButton label="Solo main" className="bg-[#303337]">S</MsButton>
            </div>
            <div className="flex-1 flex gap-px">
              <button aria-label="Metronome" className="w-[25px] flex items-center justify-center bg-[#4f88a8] text-white"><Metronome /></button>
              <button aria-label="Insert position" className="w-4 flex items-center justify-center bg-[#303337]">
                <svg width="6" height="12" aria-hidden="true"><path d="M2.500 0H3.500V2H6V5H0V2H2.500ZM0 6H6V9H3.500V12H2.500V9H0Z" fill="currentColor" /></svg>
              </button>
              <button aria-label="Channel mode" className="flex-1 flex items-center justify-center bg-[#303337]"><StereoIcon /></button>
            </div>
          </div>
          <div className="mt-2 ml-1.5 flex">
            <SideIcons lit main />
            <span className="ml-2 mr-0.5"><Fader main label="Main fader" /></span>
            <MainMeter />
          </div>
          <div className="h-[23px]" />
          <button className="mx-px h-4 rounded-[2px] bg-[#232527] text-[10px] leading-4 text-[#77797b]">オート: オフ</button>
        </div>
        <div className="flex-1 h-[263px] bg-[#303337]">
          <button className="w-full h-[19px] flex items-center justify-end gap-4 pr-1 bg-[#1f323f] border-b border-black text-[11px] text-[#cfd1d3]">
            ミックスFX <Tri />
          </button>
          <RackHead on tri label="ｲﾝｻｰﾄ" />
          <div className="h-[119px]">
            <Slot name="Vitamin Stereo" />
            <Slot name="L1 limiter Stereo" />
          </div>
          <div className="border-t border-black"><RackHead tri label="ポスト" /></div>
        </div>
      </div>
      <div className="h-[15px] bg-[#1c1d1f] text-center text-[11px] leading-[15px] text-white">メイン</div>
    </div>
  );
}

function Mixer() {
  return (
    <section className="shrink-0 flex border-y border-black bg-[#141517] pt-px">
      <MixerSide />
      <div className="flex-1 min-w-0 ml-0.5 flex flex-col bg-[#26272b] overflow-hidden">
        <div className="flex">
          {TRACKS.map(t => {
            const slots = INSERTS[t.id];
            return (
              <div key={t.id} className="shrink-0 pr-0.5 bg-[#0e0f10]">
                <div className="flex gap-0.5">
                  <div>
                    <div className="h-[3px] mb-px" style={{ background: t.color }} />
                    <ChannelStrip track={t} />
                  </div>
                  {slots && (
                    <div>
                      <div className="h-[3px] mb-px" style={{ background: t.color }} />
                      <Rack slots={slots} selected={t.selected} />
                    </div>
                  )}
                </div>
                <div className="mt-px h-[14px] text-center text-[12px] leading-[15px]" style={{ background: t.color, color: t.text }}>
                  {t.name}
                </div>
              </div>
            );
          })}
        </div>
        <div className="h-[17px] flex items-center justify-between pl-[7px] pr-[7px] pt-0.5">
          <Tri dir="left" w={6} h={9} className="text-[#707278]" />
          <Tri dir="right" w={6} h={9} className="text-[#707278]" />
        </div>
      </div>
      <MainChannel />
      <div className="w-[3px] shrink-0" />
    </section>
  );
}

/* ---------- transport ---------- */

const Stack = ({ top, bottom, className }) => (
  <div className={clsx('shrink-0 flex flex-col items-center text-[10px] text-[#b5b6b8] whitespace-nowrap', className)}>
    <span className="h-[18px] flex items-center text-[13px] text-[#dcdcdc]">{top}</span>
    <span className="h-[14px] leading-[14px]">{bottom}</span>
  </div>
);

function Transport() {
  const [view, setView] = useState('ミックス');
  const tone = 'text-[#c5c6c8]';
  return (
    <footer className="shrink-0 flex flex-col bg-[#0d1413] pb-[5px]">
      <div className="h-12 flex bg-[#5e626b]">
        <div className="w-[1248px] shrink-0 h-[42px] flex items-center bg-[#131314] [clip-path:polygon(10px_0,100%_0,1236px_100%,18px_100%)] pl-[38px] pt-[2px]">
          <Stack
            className="w-7"
            top={
              <svg width="26" height="15" viewBox="0 0 26 15" aria-label="MIDI activity">
                <circle cx="13" cy="7.500" r="6.300" fill="none" stroke="#5f666d" strokeWidth="1.300" />
                <circle cx="13" cy="7.500" r="3.800" fill="none" stroke="#7c8389" strokeWidth="1.500" strokeDasharray="1.500 1.800" />
                <path d="M0 4.500L4 7.500L0 10.500ZM22 4.500L26 7.500L22 10.500Z" fill="#49525a" />
              </svg>
            }
            bottom="MIDI"
          />
          <Stack
            className="ml-2 w-[70px]"
            top={
              <svg width="65" height="12" aria-label="Performance">
                <rect width="65" height="5" fill="#33373b" /><rect width="8" height="5" fill="#5ba3c9" />
                <rect y="7" width="65" height="5" fill="#33373b" />
              </svg>
            }
            bottom="パフォーマンス"
          />
          <svg width="24" height="24" viewBox="0 0 24 24" className="ml-[13px] shrink-0" aria-hidden="true">
            <circle cx="12" cy="12" r="10.500" fill="none" stroke="#a9aaac" strokeWidth="2.500" strokeLinecap="round" strokeDasharray=".1 4.614" />
          </svg>
          <Stack className="ml-3.5 w-[62px] items-start" top="1:18 日" bottom="最大録音時間" />
          <Stack className="ml-[22px] w-[140px]" top={<b className="text-[20px] text-[#e6e6e6]">00002.04.03.32</b>} bottom="小節" />
          <div className={clsx('ml-4 flex items-center', tone)}>
            <button aria-label="Previous marker"><Tri dir="left" w={11} h={12} className={tone} /></button>
            <button aria-label="Rewind" className="ml-3 flex"><Tri dir="left" w={9} h={11} className={tone} /><Tri dir="left" w={9} h={11} className={tone} /></button>
            <button aria-label="Forward" className="ml-3 flex"><Tri dir="right" w={9} h={11} className={tone} /><Tri dir="right" w={9} h={11} className={tone} /></button>
            <button aria-label="Next marker" className="ml-2"><Tri dir="right" w={11} h={12} className={tone} /></button>
            <button aria-label="Return to zero" className="ml-3.5 flex"><span className="w-px h-3 bg-[#c5c6c8]" /><Tri dir="left" w={11} h={12} className={tone} /></button>
            <button aria-label="Stop" className="ml-[21px] w-5 h-5 bg-[#42acd8]" />
            <button aria-label="Play" className="ml-5"><Tri dir="right" w={16} h={20} className={tone} /></button>
            <button aria-label="Record" className="ml-4 w-5 h-5 rounded-full bg-[#c5c6c8]" />
            <button aria-label="Loop" className="ml-3.5">
              <svg width="34" height="22" viewBox="0 0 34 22" fill="none" stroke="#58b4e2" strokeWidth="2.500" aria-hidden="true">
                <path d="M9 19.500C4 19 2 15 2 11C2 5 4 2 9 2H25C30 2 32 5 32 11C32 16 30 19.500 25 19.500H19L22.500 11" />
                <path d="M8 19.500H13L16 11" />
              </svg>
            </button>
          </div>
          <div className="ml-[18px] grid grid-cols-[18px_auto] text-[14px] leading-[15px] text-[#dcdcdc]">
            <b className="text-[#5f8499] text-[12px]">L</b><span>00001.01.01.00</span>
            <b className="text-[#5f8499] text-[12px]">R</b><span>00003.01.01.00</span>
          </div>
          <Stack
            className="ml-3 w-4 text-[#8f9193]"
            top={<svg width="16" height="6" fill="none" stroke="#8f9193" strokeWidth="1.200" aria-hidden="true"><path d="M0 1H5L9 5H16M5 1H9" /></svg>}
            bottom={<MdBuild size={12} />}
          />
          <Stack
            className="ml-[11px] w-4"
            top={<svg width="15" height="12" aria-hidden="true"><path d="M1 0H2V12H1ZM3 5.500H15V6.500H3ZM5 2H6V10H5ZM9 3H14V9H7V5Z" fill="#8f9193" /></svg>}
            bottom={<svg width="17" height="12" aria-hidden="true"><path d="M0 5.500H17V6.500H0ZM3 1H4V11H3ZM13 1H14V11H13ZM5 3H12V9H5Z" fill="#8f9193" /></svg>}
          />
          <Stack
            className="ml-2 w-[62px]"
            top={<span className="flex gap-2.5 items-center text-[#8f9193]"><Rec /><MdBuild size={12} /><Metronome /></span>}
            bottom="メトロノーム"
          />
          <Stack className="ml-3 w-8" top="4 / 4" bottom="拍子" />
          <Stack className="ml-[21px] w-5" top="-" bottom="調" />
          <Stack className="ml-4 w-10" top="110.00" bottom="テンポ" />
          <svg width="92" height="30" viewBox="0 0 92 30" className="ml-4 shrink-0" aria-label="Output level">
            <path d="M0 1H67V5H0ZM0 6H67V10H0Z" fill="#3a3c3f" />
            <path d="M67 1H90V10H67Z" fill="#1d1e20" />
            <path d="M0 22H50" stroke="#74abc6" strokeWidth="11" strokeDasharray="1 1" />
            <path d="M50 22H67" stroke="#3f4347" strokeWidth="11" strokeDasharray="1 1" />
            <circle cx="79" cy="22" r="4.500" fill="#58b4e2" />
            <circle cx="86" cy="22" r="4" fill="#131314" stroke="#58b4e2" strokeWidth="1.500" />
          </svg>
        </div>
        <nav className="ml-auto flex border-b-[6px] border-black/30 text-[12px] text-[#dedfe0]">
          {['編集', 'ミックス', 'ブラウズ'].map(v => (
            <button
              key={v}
              onClick={() => setView(v)}
              className={clsx('pt-1.5 border-l border-[#484b52] whitespace-nowrap', v === 'ブラウズ' ? 'w-[65px]' : 'w-14', view === v && 'bg-[#418fd2] text-white')}
            >
              {v}
            </button>
          ))}
        </nav>
      </div>
    </footer>
  );
}

export default function App() {
  return (
    <div className="h-screen flex flex-col gap-px overflow-hidden bg-black font-[family-name:'Liberation_Sans','Noto_Sans_CJK_JP',sans-serif] leading-none select-none">
      <div className="shrink-0">
        <TitleBar />
        <Toolbar />
      </div>
      <Arrangement />
      <Mixer />
      <div className="h-0.5 shrink-0 bg-[#1c1d1f]" />
      <Transport />
    </div>
  );
}
